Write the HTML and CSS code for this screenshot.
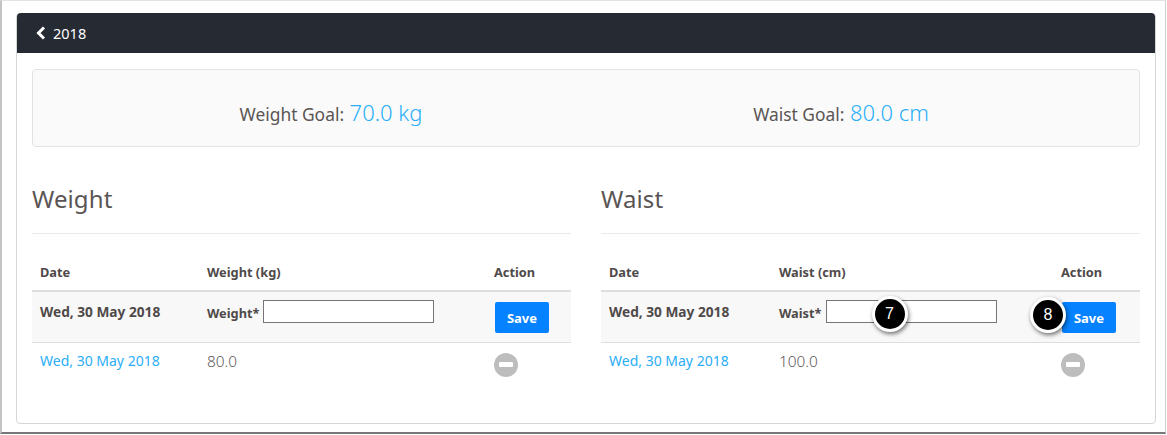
FILE: index.html
```html
<!DOCTYPE html>
<html lang="en">
<head>
<meta charset="utf-8">
<title>Weight and Waist</title>
<link rel="stylesheet" href="styles.css">
</head>
<body>
<div class="shot">
  <div class="card">
    <header class="bar">
      <svg class="chev" viewBox="0 0 10 14" width="10" height="14"><path d="M8 1.5 2.5 7 8 12.5" fill="none" stroke="#fff" stroke-width="3"/></svg>
      <span>2018</span>
    </header>
    <div class="content">
      <section class="goals">
        <p class="goal">Weight Goal: <span class="val">70.0 kg</span></p>
        <p class="goal">Waist Goal: <span class="val">80.0 cm</span></p>
      </section>
      <div class="cols">
        <section class="col">
          <h2>Weight</h2>
          <table class="tbl tbl-weight">
            <thead><tr><th class="c1">Date</th><th class="c2">Weight (kg)</th><th class="c3">Action</th></tr></thead>
            <tbody>
              <tr class="entry">
                <td class="strong">Wed, 30 May 2018</td>
                <td><label class="field"><span class="lab">Weight*</span><input type="text" class="inp"></label></td>
                <td><button class="save">Save</button></td>
              </tr>
              <tr class="data">
                <td><a href="#">Wed, 30 May 2018</a></td>
                <td class="num">80.0</td>
                <td><span class="minus"></span></td>
              </tr>
            </tbody>
          </table>
        </section>
        <section class="col">
          <h2>Waist</h2>
          <table class="tbl tbl-waist">
            <thead><tr><th class="c1">Date</th><th class="c2">Waist (cm)</th><th class="c3">Action</th></tr></thead>
            <tbody>
              <tr class="entry">
                <td class="strong">Wed, 30 May 2018</td>
                <td><label class="field"><span class="lab">Waist*</span><span class="inp-wrap"><input type="text" class="inp"><span class="badge badge-7">7</span></span></label></td>
                <td><span class="save-wrap"><button class="save">Save</button><span class="badge badge-8">8</span></span></td>
              </tr>
              <tr class="data">
                <td><a href="#">Wed, 30 May 2018</a></td>
                <td class="num">100.0</td>
                <td><span class="minus"></span></td>
              </tr>
            </tbody>
          </table>
        </section>
      </div>
    </div>
  </div>
</div>
</body>
</html>
```

FILE: styles.css
```css
* { box-sizing: border-box; }
html, body { margin: 0; padding: 0; background: #fff; }
body {
  width: 1167px;
  height: 435px;
  overflow: hidden;
  font-family: "Noto Sans", "Open Sans", sans-serif;
  color: #4f4a49;
}
.shot {
  width: 1166px;
  height: 434px;
  padding: 12px 9px 8px 14px;
  border: 1px solid #e2e2e2;
  border-left: 2px solid #c4c4c4;
  border-right: 1px solid #d0d0d0;
  border-bottom: 2px solid #777;
  background: #fff;
}
.card {
  height: 411px;
  border: 1px solid #d6d6d6;
  border-radius: 4px;
  background: #fff;
}
.bar {
  height: 40px;
  display: flex;
  align-items: center;
  gap: 7px;
  padding-left: 19px;
  margin: -1px 0 0;
  background: #262a33;
  border-radius: 4px 4px 0 0;
  color: #fff;
  font-size: 14.5px;
}
.content { padding: 16px 15px 0; }
.goals {
  height: 78px;
  padding: 7px 43px 0;
  display: grid;
  grid-template-columns: 1fr 1fr;
  align-items: center;
  text-align: center;
  background: #fafafa;
  border: 1px solid #e2e2e2;
  border-radius: 4px;
}
.goal { margin: 0; font-size: 17.4px; color: #5a5554; }
.val { font-size: 22px; font-weight: 300; color: #2aaef7; margin-left: 1px; }
.cols {
  display: grid;
  grid-template-columns: 539px 539px;
  gap: 30px;
  margin-top: 36px;
}
h2 {
  margin: 0;
  height: 51px;
  font-size: 24px;
  font-weight: 400;
  line-height: 32px;
  letter-spacing: 0.1px;
  color: #5a5554;
  border-bottom: 1px solid #e9e9e9;
}
.tbl {
  width: 100%;
  margin-top: 20px;
  border-collapse: collapse;
  table-layout: fixed;
  font-size: 14px;
}
.tbl-weight .c1 { width: 167px; }
.tbl-weight .c3 { width: 85px; }
.tbl-waist .c1 { width: 170px; }
.tbl-waist .c3 { width: 87px; }
th {
  height: 37px;
  padding: 0 8px;
  text-align: left;
  font-size: 12.8px;
  font-weight: 700;
  border-bottom: 2px solid #dedede;
}
td { padding: 0 8px; vertical-align: top; }
.entry { height: 51px; background: #f8f8f8; border-bottom: 1px solid #dedede; }
.entry td { padding-top: 10px; }
.data td { padding-top: 8px; }
.strong { font-weight: 700; font-size: 13.7px; }
.num { font-size: 15.4px; color: #5f5a59; font-weight: 300; }
a { color: #2aaef7; text-decoration: none; }
.field { display: flex; align-items: flex-start; gap: 4px; margin-top: -2px; }
.lab { margin-top: 4px; font-size: 12.8px; font-weight: 700; }
.inp {
  display: block;
  width: 171px;
  height: 23px;
  padding: 0;
  border: 1px solid #767676;
  background: #fff;
}
.save {
  display: block;
  width: 54px;
  height: 31px;
  margin-left: 1px;
  padding: 0;
  border: 0;
  border-radius: 2px;
  background: #0582ff;
  color: #fff;
  font-family: inherit;
  font-size: 13px;
  font-weight: 700;
}
.minus {
  display: block;
  width: 24px;
  height: 24px;
  margin-top: 2px;
  border-radius: 50%;
  background: #bdbdbd;
  position: relative;
}
.minus::after {
  content: "";
  position: absolute;
  left: 5px;
  top: 9.5px;
  width: 14px;
  height: 5px;
  border-radius: 1px;
  background: #fff;
}
.inp-wrap, .save-wrap { position: relative; display: block; }
.badge {
  position: absolute;
  width: 36px;
  height: 36px;
  display: flex;
  align-items: center;
  justify-content: center;
  border: 3px solid #fff;
  border-radius: 50%;
  background: #000;
  color: #fff;
  font-family: "Liberation Sans", sans-serif;
  font-size: 16px;
  font-weight: 400;
  box-shadow: 1px 2px 4px rgba(0, 0, 0, 0.55);
}
.badge-7 { left: 46px; top: -4px; }
.badge-8 { left: -31px; top: -5px; }
```
